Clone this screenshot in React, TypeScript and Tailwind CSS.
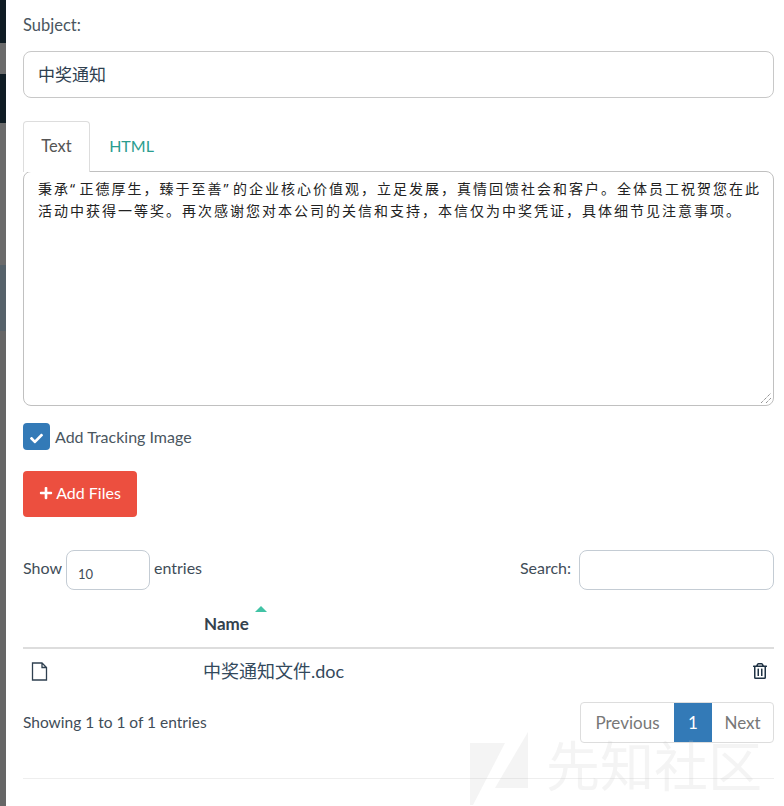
import { FaCheck, FaPlus, FaRegTrashAlt } from "react-icons/fa";

const base = "font-['Lato','Noto_Sans_CJK_SC',sans-serif]";

function Backdrop() {
  return (
    <div className="flex w-[6px] shrink-0 flex-col">
      <div className="h-[43px] bg-[#0f1c24]" />
      <div className="h-[31px] bg-[#6b6b6b]" />
      <div className="h-[49px] bg-[#0f1c24]" />
      <div className="h-[142px] bg-[#6b6b6b]" />
      <div className="h-[66px] bg-[#56626a]" />
      <div className="flex-1 bg-[#666666]" />
    </div>
  );
}

function Watermark() {
  return (
    <div className="absolute bottom-0 right-[22px] flex h-[76px] items-end gap-[16px] text-[#c8c8c8]/20">
      <svg width="60" height="76" viewBox="0 0 60 76" fill="currentColor">
        <path d="M0 13H35L3 75H0ZM58 2V58H25Z" />
      </svg>
      <span className="mb-[17px] font-['Noto_Sans_CJK_SC',sans-serif] text-[54px] leading-[50px]">先知社区</span>
    </div>
  );
}

export default function App() {
  return (
    <div className={`flex h-[806px] w-[784px] overflow-hidden bg-white text-[#3f4d58] ${base}`}>
      <Backdrop />
      <main className="relative flex-1 pl-[17px] pr-[10px]">
        <label className="block pt-[15px] text-[16.5px] leading-[21px] text-[#4a5660]">Subject:</label>
        <div className="mt-[15px] flex h-[47px] items-center rounded-lg border border-[#c8c8c8] px-[14px] text-[17px] text-[#2f4050]">
          中奖通知
        </div>

        <div className="mt-[23px] flex h-[50px]">
          <div className="z-10 -mb-px flex w-[67px] items-center justify-center rounded-t border border-b-0 border-[#dddddd] bg-white pb-[1px] text-[16.5px] text-[#555555]">
            Text
          </div>
          <div className="flex w-[83px] items-center justify-center pb-[1px] text-[16px] text-[#2a9d8f]">HTML</div>
        </div>

        <div className="relative h-[235px] rounded-lg border border-[#c0c0c0] pl-[14px] pr-[8px] pt-[6px] font-['Noto_Sans','Noto_Sans_CJK_SC',sans-serif] text-[14px] leading-[22px] tracking-[2px] text-[#222222]">
          秉承<span className="tracking-[4.5px]">“</span>正德厚生，臻于至善<span className="tracking-[4.5px]">”</span>的企业核心价值观，立足发展，真情回馈社会和客户。全体员工祝贺您在此活动中获得一等奖。再次感谢您对本公司的关信和支持，本信仅为中奖凭证，具体细节见注意事项。
          <svg className="absolute bottom-[1px] right-[1px]" width="12" height="12" viewBox="0 0 12 12" fill="none" stroke="#666666" strokeWidth="1">
            <path d="M1 11 11 1M6 11 11 6" strokeDasharray="1 1" />
          </svg>
        </div>

        <div className="mt-[17px] flex items-center gap-[5px]">
          <span className="flex h-[27px] w-[27px] items-center justify-center rounded bg-[#337ab7] text-white">
            <FaCheck size={13} className="mt-[3px]" />
          </span>
          <span className="text-[16px] text-[#4a5660]">Add Tracking Image</span>
        </div>

        <button
          type="button"
          className="mt-[21px] flex h-[46px] w-[114px] items-center justify-center rounded bg-[#ec4f3f] pb-[2px] text-[16px] text-white"
        >
          <FaPlus size={14} />
          <span className="ml-[3px]">Add Files</span>
        </button>

        <div className="mt-[33px] flex h-[40px] items-center justify-between text-[16px]">
          <div className="flex items-center gap-[4px]">
            <span className="pb-[4px]">Show</span>
            <div className="flex h-[40px] w-[84px] items-end rounded-lg border border-[#c4ccd4] pb-[7px] pl-[11px] text-[13px] leading-4">
              10
            </div>
            <span className="pb-[4px]">entries</span>
          </div>
          <div className="flex items-center gap-[8px]">
            <span className="pb-[4px]">Search:</span>
            <div className="h-[40px] w-[195px] rounded-lg border border-[#c4ccd4]" />
          </div>
        </div>

        <div className="relative mt-[16px] flex h-[43px] items-end border-b-[2px] border-[#dddddd] pb-[13px] pl-[181px] text-[17px] font-bold leading-5 text-[#34424e]">
          Name
          <span className="absolute left-[232px] top-0 h-0 w-0 border-x-[6px] border-b-[6px] border-x-transparent border-b-[#41c3a5]" />
        </div>

        <div className="flex h-[45px] items-center justify-between pb-[1px] pl-[8px] pr-[6px]">
          <div className="flex items-center">
            <svg width="17" height="19" viewBox="0 0 17 19" fill="none" stroke="#2f4050" strokeWidth="1.3">
              <path d="M1.5 1H11L15.5 5.5V18H1.5ZM11 1V5.5H15.5" />
            </svg>
            <span className="ml-[155px] text-[18px] text-[#33495c]">中奖通知文件.doc</span>
          </div>
          <FaRegTrashAlt size={16} className="text-[#1f3244]" />
        </div>

        <div className="mt-[8px] flex h-[41px] items-center justify-between text-[16px]">
          <span className="text-[15.5px]">Showing 1 to 1 of 1 entries</span>
          <div className="flex h-[41px] overflow-hidden rounded border border-[#dddddd] text-[17px] text-[#777777]">
            <span className="flex w-[93px] items-center justify-center">Previous</span>
            <span className="flex w-[38px] items-center justify-center bg-[#337ab7] text-white">1</span>
            <span className="flex w-[61px] items-center justify-center">Next</span>
          </div>
        </div>

        <div className="mt-[35px] border-t border-[#eeeeee]" />

        <Watermark />
      </main>
    </div>
  );
}
